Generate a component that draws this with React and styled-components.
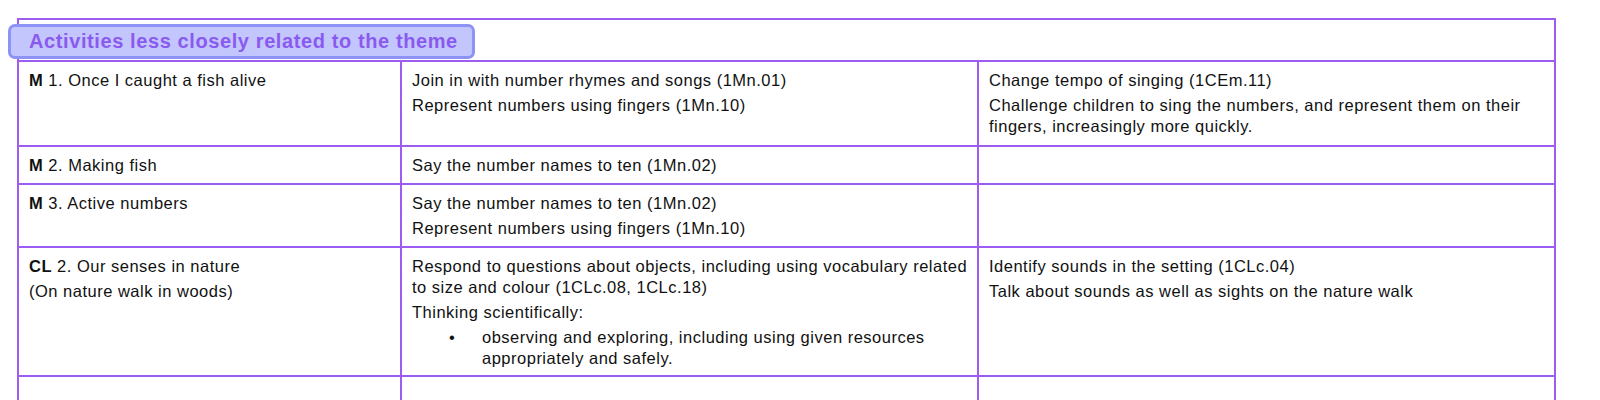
import styled, { createGlobalStyle } from "styled-components";

const GlobalStyle = createGlobalStyle`
  body {
    margin: 0;
    background: #fff;
    font-family: "Liberation Sans", Arial, sans-serif;
    color: #111;
  }
`;

const Page = styled.div`
  padding: 18px 0 0 17px;
  height: 400px;
  overflow: hidden;
  box-sizing: border-box;
`;

const Table = styled.table`
  border-collapse: collapse;
  table-layout: fixed;
  width: 1537px;
  font-size: 16.5px;
  letter-spacing: 0.5px;
  line-height: 21px;
`;

const HeaderCell = styled.td`
  border: 2px solid #9d5cf2;
  height: 42px;
  padding: 2px 0 0;
  box-sizing: border-box;
  vertical-align: middle;
`;

const Highlight = styled.span`
  display: inline-block;
  margin-left: -11px;
  padding: 3px 14px 3px 18px;
  background: #c3c6fc;
  border: 3px solid #8d92f6;
  border-radius: 7px;
  color: #8a5af0;
  font-weight: bold;
  font-size: 20px;
  letter-spacing: 0.6px;
  line-height: 23px;
`;

const Cell = styled.td`
  border: 2px solid #9d5cf2;
  vertical-align: top;
  padding: 8px 2px 0 10px;
  height: ${({ h }) => h}px;
  box-sizing: border-box;
`;

const Line = styled.p`
  margin: 0 0 4px;
`;

const Code = styled.b`
  font-weight: bold;
`;

const Bullets = styled.ul`
  margin: 0;
  padding-left: 70px;
  list-style: none;
`;

const Bullet = styled.li`
  position: relative;
  &::before {
    content: "•";
    position: absolute;
    left: -33px;
  }
`;

const rows = [
  {
    h: 85,
    a: [<><Code>M</Code> 1. Once I caught a fish alive</>],
    b: ["Join in with number rhymes and songs (1Mn.01)", "Represent numbers using fingers (1Mn.10)"],
    c: [
      "Change tempo of singing (1CEm.11)",
      "Challenge children to sing the numbers, and represent them on their fingers, increasingly more quickly.",
    ],
  },
  {
    h: 38,
    a: [<><Code>M</Code> 2. Making fish</>],
    b: ["Say the number names to ten (1Mn.02)"],
    c: [],
  },
  {
    h: 63,
    a: [<><Code>M</Code> 3. Active numbers</>],
    b: ["Say the number names to ten (1Mn.02)", "Represent numbers using fingers (1Mn.10)"],
    c: [],
  },
  {
    h: 129,
    a: [<><Code>CL</Code> 2. Our senses in nature</>, "(On nature walk in woods)"],
    b: [
      "Respond to questions about objects, including using vocabulary related to size and colour (1CLc.08, 1CLc.18)",
      "Thinking scientifically:",
    ],
    bullets: ["observing and exploring, including using given resources appropriately and safely."],
    c: ["Identify sounds in the setting (1CLc.04)", "Talk about sounds as well as sights on the nature walk"],
  },
  { h: 80, a: [], b: [], c: [] },
];

export default function App() {
  return (
    <>
      <GlobalStyle />
      <Page>
        <Table>
          <colgroup>
            <col style={{ width: 383 }} />
            <col style={{ width: 577 }} />
            <col style={{ width: 577 }} />
          </colgroup>
          <tbody>
            <tr>
              <HeaderCell colSpan={3}>
                <Highlight>Activities less closely related to the theme</Highlight>
              </HeaderCell>
            </tr>
            {rows.map((row, i) => (
              <tr key={i}>
                <Cell h={row.h}>
                  {row.a.map((t, j) => <Line key={j}>{t}</Line>)}
                </Cell>
                <Cell h={row.h}>
                  {row.b.map((t, j) => <Line key={j}>{t}</Line>)}
                  {row.bullets && (
                    <Bullets>
                      {row.bullets.map((t, j) => <Bullet key={j}>{t}</Bullet>)}
                    </Bullets>
                  )}
                </Cell>
                <Cell h={row.h}>
                  {row.c.map((t, j) => <Line key={j}>{t}</Line>)}
                </Cell>
              </tr>
            ))}
          </tbody>
        </Table>
      </Page>
    </>
  );
}
